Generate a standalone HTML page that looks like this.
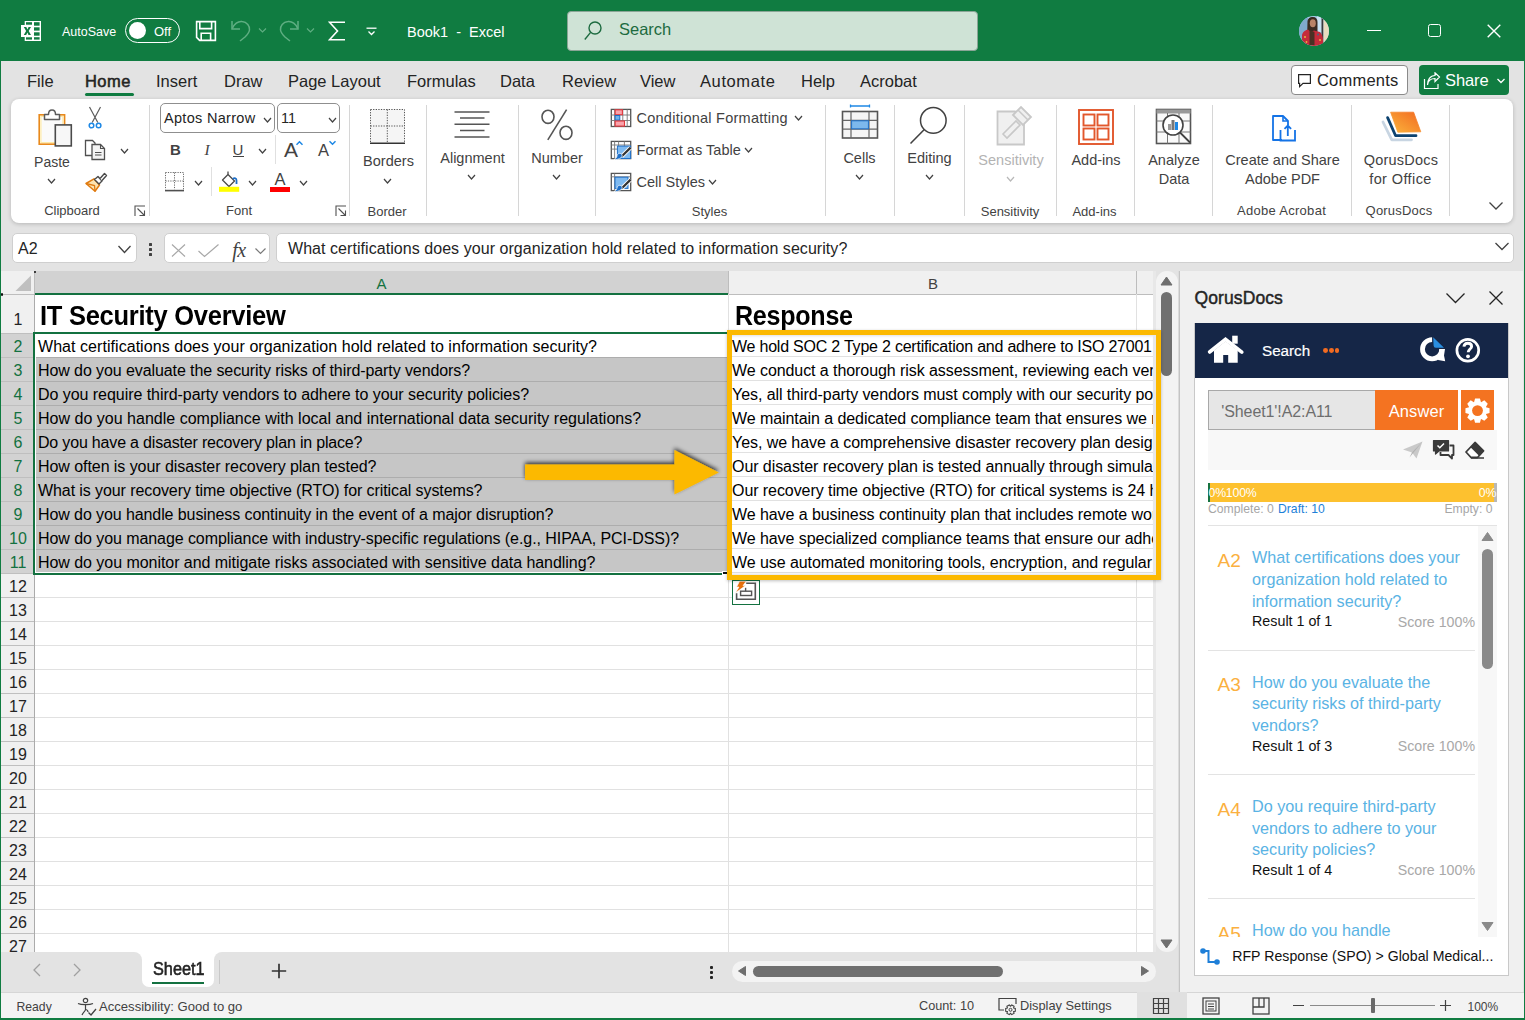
<!DOCTYPE html><html><head><meta charset="utf-8"><style>*{box-sizing:border-box;margin:0;padding:0}
html,body{width:1525px;height:1020px;overflow:hidden;background:#e3e3e3;font-family:"Liberation Sans",sans-serif;color:#242424}
.a{position:absolute}
#title{left:0;top:0;width:1525px;height:61px;background:#107c41}
#tabs{left:0;top:61px;width:1525px;height:38px;background:#e3e3e3}
#lb{left:0;top:61px;width:1px;height:959px;background:#107c41}
#rb{left:1524px;top:61px;width:1px;height:959px;background:#107c41}
#bb{left:0;top:1018px;width:1525px;height:2px;background:#107c41}
.t{position:absolute;top:11px;font-size:16.5px;color:#242424;white-space:nowrap}
</style></head><body>
<div id="title" class="a">
<svg class="a" style="left:20px;top:20px" width="22" height="22" viewBox="0 0 22 22"><path d="M4.7 1H21V21H4.7V17H1V5H4.7Z" fill="#fff"/><g fill="#107c41"><rect x="6" y="2.2" width="6" height="2.5"/><rect x="14" y="2.2" width="5.6" height="3.5"/><rect x="14" y="7.3" width="5.6" height="3.3"/><rect x="14" y="12.3" width="5.6" height="3.4"/><rect x="14" y="17.2" width="5.6" height="2.4"/><rect x="6" y="17.3" width="6" height="2.3"/></g><path d="M3.8 7H6.3L7.4 9.5L8.6 7H11L8.7 11L11 15H8.5L7.4 12.4L6.2 15H3.8L6.1 11Z" fill="#107c41"/></svg>
<div class="a" style="left:62px;top:24.5px;font-size:12.5px;color:#fff">AutoSave</div>
<div class="a" style="left:125px;top:18px;width:55px;height:25px;border:1px solid #fff;border-radius:13px"></div>
<div class="a" style="left:129px;top:22px;width:17px;height:17px;border-radius:50%;background:#fff"></div>
<div class="a" style="left:154px;top:23.5px;font-size:13px;color:#fff">Off</div>
<svg class="a" style="left:195px;top:20px" width="23" height="23" viewBox="0 0 23 23" fill="none" stroke="#fff" stroke-width="1.6"><path d="M1.6 1.6H20.4V20.4H4.6L1.6 17.4Z"/><path d="M4.8 1.6V8.6H16.6V1.6"/><path d="M6.2 20.4V13.2H15.6V20.4"/></svg>
<svg class="a" style="left:230px;top:19px" width="22" height="23" viewBox="0 0 22 23" fill="none" stroke="#5fae82" stroke-width="1.5"><path d="M2 2V10H10"/><path d="M2.3 9.5C4 5 8 2 12 2.5C17 3 20 7 19.5 11C19 14 17 16 15 18L10 22"/></svg>
<svg class="a" style="left:258px;top:27px" width="9" height="7" viewBox="0 0 9 7" fill="none" stroke="#5fae82" stroke-width="1.2"><path d="M1 1.5L4.5 5L8 1.5"/></svg>
<svg class="a" style="left:278px;top:19px" width="22" height="23" viewBox="0 0 22 23" fill="none" stroke="#5fae82" stroke-width="1.5"><path d="M20 2V10H12"/><path d="M19.7 9.5C18 5 14 2 10 2.5C5 3 2 7 2.5 11C3 14 5 16 7 18L12 22"/></svg>
<svg class="a" style="left:306px;top:27px" width="9" height="7" viewBox="0 0 9 7" fill="none" stroke="#5fae82" stroke-width="1.2"><path d="M1 1.5L4.5 5L8 1.5"/></svg>
<svg class="a" style="left:328px;top:21px" width="18" height="20" viewBox="0 0 18 20" fill="none" stroke="#fff" stroke-width="1.6"><path d="M17 1.3H1.5L9.5 10L1.5 18.7H17"/></svg>
<svg class="a" style="left:366px;top:27px" width="11" height="10" viewBox="0 0 11 10" fill="none" stroke="#fff" stroke-width="1.3"><path d="M0.5 1.2H10.5"/><path d="M2.5 4.5L5.5 7.5L8.5 4.5"/></svg>
<div class="a" style="left:407px;top:23.5px;font-size:14.5px;color:#fff;white-space:pre">Book1  -  Excel</div>
<div class="a" style="left:567px;top:11px;width:411px;height:40px;background:#cfe3d6;border:1px solid #8aa596;border-radius:4px"></div>
<svg class="a" style="left:582px;top:18px" width="24" height="24" viewBox="0 0 24 24" fill="none" stroke="#1d6b40" stroke-width="1.4"><circle cx="13" cy="10" r="6"/><path d="M8.6 14.4L2.8 21.5"/></svg>
<div class="a" style="left:619px;top:20px;font-size:16.5px;color:#1d6b40">Search</div>
<svg class="a" style="left:1299px;top:16px" width="30" height="30" viewBox="0 0 30 30"><defs><clipPath id="av"><circle cx="15" cy="15" r="15"/></clipPath></defs><g clip-path="url(#av)">
<rect width="30" height="30" fill="#a8cdea"/>
<rect x="0" y="0" width="9" height="30" fill="#7fa9cc"/>
<rect x="18" y="0" width="6" height="16" fill="#c9e2f2"/>
<rect x="22.5" y="0" width="2" height="30" fill="#3a3a3a"/>
<rect x="24.5" y="0" width="6" height="30" fill="#e9dcbf"/>
<path d="M8.5 5C9 1.5 12 0.5 14 1C17 1 18.5 3 18.5 6V28H8Z" fill="#3b2a20"/>
<ellipse cx="13.8" cy="7.2" rx="3" ry="4" fill="#b98366"/>
<path d="M3 30V19C4 15 7 14 9 13.5L12 16L15 14.5L21 16C23 18 24 21 24 24V30Z" fill="#c52a3a"/>
<path d="M10.5 14V29H15.5V16Z" fill="#4a3024"/>
<circle cx="6" cy="21" r="1" fill="#e6b640"/><circle cx="19" cy="18.5" r="0.9" fill="#2f6f8a"/><circle cx="21" cy="24" r="1" fill="#e6b640"/><circle cx="7.5" cy="26" r="0.9" fill="#e6b640"/>
</g></svg>
<div class="a" style="left:1367px;top:29.5px;width:14px;height:1.2px;background:#fff"></div>
<div class="a" style="left:1428px;top:24px;width:13px;height:13px;border:1.4px solid #fff;border-radius:2.5px"></div>
<svg class="a" style="left:1487px;top:24px" width="14" height="14" viewBox="0 0 14 14" stroke="#fff" stroke-width="1.4"><path d="M0.7 0.7L13.3 13.3M13.3 0.7L0.7 13.3"/></svg>
</div>
<div id="tabs" class="a">
<div class="t" style="left:27px">File</div>
<div class="t" style="left:85px;top:11px;font-size:16.5px;letter-spacing:0.45px;-webkit-text-stroke:0.55px #242424">Home</div>
<div class="a" style="left:85px;top:32px;width:49px;height:3px;border-radius:2px;background:#107c41"></div>
<div class="t" style="left:156px">Insert</div>
<div class="t" style="left:224px">Draw</div>
<div class="t" style="left:288px">Page Layout</div>
<div class="t" style="left:407px">Formulas</div>
<div class="t" style="left:500px">Data</div>
<div class="t" style="left:562px">Review</div>
<div class="t" style="left:640px">View</div>
<div class="t" style="left:700px;letter-spacing:0.6px">Automate</div>
<div class="t" style="left:801px">Help</div>
<div class="t" style="left:860px">Acrobat</div>
<div class="a" style="left:1291px;top:4px;width:117px;height:30px;background:#fff;border:1px solid #8a8a8a;border-radius:4px"></div>
<svg class="a" style="left:1297px;top:12px" width="16" height="16" viewBox="0 0 16 16" fill="none" stroke="#242424" stroke-width="1.2"><path d="M1.6 1.6H13.4V10.4H6L2.6 13.6V10.4H1.6Z"/></svg>
<div class="a" style="left:1317px;top:10px;font-size:16.5px;color:#242424;letter-spacing:0.2px">Comments</div>
<div class="a" style="left:1419px;top:4px;width:90px;height:30px;background:#107c41;border-radius:4px"></div>
<svg class="a" style="left:1423px;top:11px" width="18" height="18" viewBox="0 0 18 18" fill="none" stroke="#fff" stroke-width="1.2"><path d="M1.5 7V16.5H15V12"/><path d="M4.5 13C5 9 8 6.5 12 6.5V9.5L16.5 5L12 0.8V3.5C7 3.5 4.5 8 4.5 13Z"/></svg>
<div class="a" style="left:1445px;top:10px;font-size:16.5px;color:#fff;letter-spacing:-0.1px">Share</div>
<svg class="a" style="left:1495.5px;top:15.5px" width="10" height="8" viewBox="0 0 10 8" fill="none" stroke="#fff" stroke-width="1.3"><path d="M1.5 2L5 5.5L8.5 2"/></svg>
</div>

<div class="a" style="left:11px;top:99px;width:1502px;height:124px;background:#fff;border-radius:8px;box-shadow:0 1px 4px rgba(0,0,0,.2)"></div>
<svg class="a" style="left:36px;top:106px;" width="38" height="42" viewBox="0 0 38 42">
<rect x="3.2" y="8.8" width="25.4" height="29.4" fill="#fff6dc" stroke="#e8891c" stroke-width="1.6"/>
<rect x="5" y="10.5" width="21.8" height="26" fill="#fafafa" stroke="#fde9a6" stroke-width="1"/>
<path d="M8.5 13.5V8.5H12.5C12.5 6 13.8 4 16 4C18.2 4 19.5 6 19.5 8.5H23.5V13.5Z" fill="#fff" stroke="#5c5c5c" stroke-width="1.5" stroke-linejoin="round"/>
<rect x="19.3" y="18.9" width="16" height="21" fill="#f7f7f7" stroke="#4a4a4a" stroke-width="1.6"/>
</svg>
<div class="a" style="left:-198px;width:500px;text-align:center;top:154.6px;font-size:14px;line-height:1;color:#424242;white-space:pre;">Paste</div>
<svg class="a" style="left:47px;top:178px;" width="9" height="6" viewBox="0 0 9 6"><path d="M1 1L4.5 5L8 1" fill="none" stroke="#424242" stroke-width="1.2"/></svg>
<svg class="a" style="left:86px;top:106px;" width="18" height="24" viewBox="0 0 18 24">
<path d="M3.5 1L11.8 16.5M14.5 1L6.2 16.5" fill="none" stroke="#5c5c5c" stroke-width="1.2"/>
<circle cx="5.5" cy="19.5" r="2.3" fill="#fff" stroke="#1e88e5" stroke-width="1.5"/>
<circle cx="12.6" cy="19.5" r="2.3" fill="#fff" stroke="#1e88e5" stroke-width="1.5"/>
</svg>
<svg class="a" style="left:83px;top:139px;" width="24" height="22" viewBox="0 0 24 22">
<path d="M2.5 1.5H9.5L12 4V16.5H2.5Z" fill="#fff" stroke="#505050" stroke-width="1.3"/>
<path d="M9 5.5H17.5L21.5 9.5V20.5H9Z" fill="#f4f4f4" stroke="#505050" stroke-width="1.3"/>
<path d="M17.5 5.5V9.5H21.5" fill="none" stroke="#505050" stroke-width="1.1"/>
<path d="M12 13.5H18.5M12 16H18.5" stroke="#505050" stroke-width="1"/>
</svg>
<svg class="a" style="left:120px;top:147.5px;" width="9" height="6" viewBox="0 0 9 6"><path d="M1 1L4.5 5L8 1" fill="none" stroke="#424242" stroke-width="1.2"/></svg>
<svg class="a" style="left:84px;top:170px;" width="24" height="23" viewBox="0 0 24 23">
<path d="M2 13.5L10 8.8L15.5 15L11 21.3Z" fill="#fce3b0" stroke="#e07b10" stroke-width="1.5" stroke-linejoin="round"/>
<path d="M2 13.5L10.5 15.5L11 21.3" fill="none" stroke="#e07b10" stroke-width="1.3"/>
<path d="M10.5 9.5L14 6.5L18 11L15 14Z" fill="#fff" stroke="#4a4a4a" stroke-width="1.4" stroke-linejoin="round"/>
<path d="M16 8.5L20.5 3.5L22.5 5.5L18 10.5" fill="#fff" stroke="#4a4a4a" stroke-width="1.4" stroke-linejoin="round"/>
</svg>
<div class="a" style="left:-178px;width:500px;text-align:center;top:203.9px;font-size:13px;line-height:1;color:#424242;white-space:pre;">Clipboard</div>
<svg class="a" style="left:134px;top:205px;" width="12" height="12" viewBox="0 0 12 12"><path d="M1 11V1H11" fill="none" stroke="#505050" stroke-width="1.1"/><path d="M3.5 3.5L10.5 10.5M5.5 10.5H10.5V5.5" fill="none" stroke="#505050" stroke-width="1.1"/></svg>
<div class="a" style="left:149px;top:105px;width:1px;height:111px;background:#d6d6d6;"></div>
<div class="a" style="left:160px;top:103px;width:115px;height:30px;background:#fff;border:1px solid #8f8f8f;border-radius:5px"></div>
<div class="a" style="left:164px;top:111.3px;font-size:14.5px;line-height:1;color:#242424;white-space:pre;letter-spacing:0.3px;">Aptos Narrow</div>
<svg class="a" style="left:262.5px;top:116.5px;" width="9" height="6" viewBox="0 0 9 6"><path d="M1 1L4.5 5L8 1" fill="none" stroke="#424242" stroke-width="1.2"/></svg>
<div class="a" style="left:277px;top:103px;width:63px;height:30px;background:#fff;border:1px solid #8f8f8f;border-radius:5px"></div>
<div class="a" style="left:281px;top:111.3px;font-size:14.5px;line-height:1;color:#242424;white-space:pre;">11</div>
<svg class="a" style="left:327.5px;top:116.5px;" width="9" height="6" viewBox="0 0 9 6"><path d="M1 1L4.5 5L8 1" fill="none" stroke="#424242" stroke-width="1.2"/></svg>
<div class="a" style="left:-74.5px;width:500px;text-align:center;top:142.2px;font-size:15px;line-height:1;color:#424242;white-space:pre;font-weight:bold;">B</div>
<div class="a" style="left:-43px;width:500px;text-align:center;top:141.8px;font-size:15.5px;line-height:1;color:#424242;white-space:pre;font-family:'Liberation Serif';font-style:italic;">I</div>
<div class="a" style="left:-12px;width:500px;text-align:center;top:142.2px;font-size:15px;line-height:1;color:#424242;white-space:pre;">U</div>
<div class="a" style="left:233px;top:155.5px;width:11px;height:1.3px;background:#424242;"></div>
<svg class="a" style="left:258px;top:147.5px;" width="9" height="6" viewBox="0 0 9 6"><path d="M1 1L4.5 5L8 1" fill="none" stroke="#424242" stroke-width="1.2"/></svg>
<div class="a" style="left:275px;top:135px;width:1px;height:29px;background:#e0e0e0;"></div>
<div class="a" style="left:41px;width:500px;text-align:center;top:138.6px;font-size:21px;line-height:1;color:#424242;white-space:pre;">A</div>
<svg class="a" style="left:295px;top:140px;" width="9" height="6" viewBox="0 0 9 6"><path d="M1.5 4.8L4.5 1.8L7.5 4.8" fill="none" stroke="#1e88e5" stroke-width="1.5"/></svg>
<div class="a" style="left:73.5px;width:500px;text-align:center;top:142.4px;font-size:16.5px;line-height:1;color:#424242;white-space:pre;">A</div>
<svg class="a" style="left:328px;top:140px;" width="9" height="6" viewBox="0 0 9 6"><path d="M1.5 1.2L4.5 4.2L7.5 1.2" fill="none" stroke="#1e88e5" stroke-width="1.5"/></svg>
<svg class="a" style="left:164px;top:171px;" width="22" height="22" viewBox="0 0 22 22">
<path d="M1.5 1.5H19.5V18.5M1.5 1.5V18.5M10.5 1.5V18.5M1.5 10H19.5" fill="none" stroke="#6a6a6a" stroke-width="1" stroke-dasharray="1.2 1.2"/>
<path d="M1 19.6H20" stroke="#505050" stroke-width="1.6"/>
</svg>
<svg class="a" style="left:194px;top:179.5px;" width="9" height="6" viewBox="0 0 9 6"><path d="M1 1L4.5 5L8 1" fill="none" stroke="#424242" stroke-width="1.2"/></svg>
<div class="a" style="left:211px;top:167px;width:1px;height:29px;background:#e0e0e0;"></div>
<svg class="a" style="left:218px;top:170px;" width="24" height="23" viewBox="0 0 24 23">
<path d="M4.5 10L10 4.5L16.5 11L11 16.5Z" fill="#fff" stroke="#4a4a4a" stroke-width="1.3" stroke-linejoin="round"/>
<path d="M10 4.5V1.5" stroke="#4a4a4a" stroke-width="1.3"/>
<path d="M14.8 9C16.5 7.5 18.5 8 18.5 10.5V14" fill="none" stroke="#1e6fc8" stroke-width="1.8"/>
<rect x="1" y="16.8" width="20.2" height="5" fill="#ffff00"/>
</svg>
<svg class="a" style="left:248px;top:179.5px;" width="9" height="6" viewBox="0 0 9 6"><path d="M1 1L4.5 5L8 1" fill="none" stroke="#424242" stroke-width="1.2"/></svg>
<div class="a" style="left:30px;width:500px;text-align:center;top:171.2px;font-size:16.5px;line-height:1;color:#424242;white-space:pre;">A</div>
<div class="a" style="left:270px;top:187px;width:20px;height:5px;background:#ff0000;"></div>
<svg class="a" style="left:299px;top:179.5px;" width="9" height="6" viewBox="0 0 9 6"><path d="M1 1L4.5 5L8 1" fill="none" stroke="#424242" stroke-width="1.2"/></svg>
<div class="a" style="left:-11px;width:500px;text-align:center;top:203.6px;font-size:13px;line-height:1;color:#424242;white-space:pre;">Font</div>
<svg class="a" style="left:335px;top:205px;" width="12" height="12" viewBox="0 0 12 12"><path d="M1 11V1H11" fill="none" stroke="#505050" stroke-width="1.1"/><path d="M3.5 3.5L10.5 10.5M5.5 10.5H10.5V5.5" fill="none" stroke="#505050" stroke-width="1.1"/></svg>
<div class="a" style="left:349px;top:105px;width:1px;height:111px;background:#d6d6d6;"></div>
<svg class="a" style="left:369px;top:108px;" width="37" height="37" viewBox="0 0 37 37">
<rect x="1.5" y="1.5" width="34" height="33" fill="#f5f5f5"/>
<path d="M1.5 1.5H35.5V34.5M1.5 1.5V34.5M18.3 1.5V34.5M1.5 18H35.5" fill="none" stroke="#555" stroke-width="1" stroke-dasharray="1.3 1.3"/>
<path d="M1 35.2H36" stroke="#333" stroke-width="1.6"/>
</svg>
<div class="a" style="left:138.5px;width:500px;text-align:center;top:154.3px;font-size:14.5px;line-height:1;color:#424242;white-space:pre;">Borders</div>
<svg class="a" style="left:383px;top:177.5px;" width="9" height="6" viewBox="0 0 9 6"><path d="M1 1L4.5 5L8 1" fill="none" stroke="#424242" stroke-width="1.2"/></svg>
<div class="a" style="left:137px;width:500px;text-align:center;top:204.8px;font-size:13px;line-height:1;color:#424242;white-space:pre;">Border</div>
<div class="a" style="left:426px;top:105px;width:1px;height:111px;background:#d6d6d6;"></div>
<svg class="a" style="left:453px;top:110px;" width="38" height="29" viewBox="0 0 38 29">
<path d="M1.5 2H36.5M7 8H31.5M1.5 14.3H36.5M7 20.6H31.5M1.5 27H36.5" stroke="#555" stroke-width="1.5"/>
</svg>
<div class="a" style="left:222.5px;width:500px;text-align:center;top:150.6px;font-size:14.5px;line-height:1;color:#424242;white-space:pre;">Alignment</div>
<svg class="a" style="left:467px;top:173.5px;" width="9" height="6" viewBox="0 0 9 6"><path d="M1 1L4.5 5L8 1" fill="none" stroke="#424242" stroke-width="1.2"/></svg>
<div class="a" style="left:518px;top:105px;width:1px;height:111px;background:#d6d6d6;"></div>
<svg class="a" style="left:538px;top:107px;" width="38" height="36" viewBox="0 0 38 36"><ellipse cx="10" cy="9.8" rx="6" ry="6.6" fill="none" stroke="#555" stroke-width="1.6"/><ellipse cx="28" cy="25.8" rx="6" ry="6.6" fill="none" stroke="#555" stroke-width="1.6"/><path d="M28.6 2.7L9.8 32.8" stroke="#555" stroke-width="1.6"/></svg>
<div class="a" style="left:307px;width:500px;text-align:center;top:150.6px;font-size:14.5px;line-height:1;color:#424242;white-space:pre;">Number</div>
<svg class="a" style="left:552px;top:173.5px;" width="9" height="6" viewBox="0 0 9 6"><path d="M1 1L4.5 5L8 1" fill="none" stroke="#424242" stroke-width="1.2"/></svg>
<div class="a" style="left:595px;top:105px;width:1px;height:111px;background:#d6d6d6;"></div>
<svg class="a" style="left:610px;top:108px;" width="22" height="20" viewBox="0 0 22 20">
<rect x="1.3" y="1.4" width="19.4" height="17.1" fill="#fff" stroke="#555" stroke-width="1.3"/>
<path d="M1.3 7H20.7M1.3 12.5H20.7M4.6 1.4V18.5M12.8 1.4V18.5M17.2 1.4V18.5" stroke="#777" stroke-width="0.9"/>
<rect x="5.2" y="1.8" width="7.2" height="4.9" fill="#f9a3ab" stroke="#e0393e" stroke-width="1.1"/>
<rect x="5.2" y="7.5" width="4.6" height="4.6" fill="#6fb1ec" stroke="#1e6fc8" stroke-width="1"/>
<rect x="5.2" y="13" width="9.3" height="5.1" fill="#f9a3ab" stroke="#e0393e" stroke-width="1.1"/>
</svg>
<div class="a" style="left:636.5px;top:111.4px;font-size:14.5px;line-height:1;color:#424242;white-space:pre;letter-spacing:0.25px;">Conditional Formatting</div>
<svg class="a" style="left:794px;top:115px;" width="9" height="6" viewBox="0 0 9 6"><path d="M1 1L4.5 5L8 1" fill="none" stroke="#424242" stroke-width="1.2"/></svg>
<svg class="a" style="left:610px;top:140px;" width="22" height="21" viewBox="0 0 22 21">
<rect x="1.3" y="1.4" width="19.4" height="17.2" fill="#fff" stroke="#555" stroke-width="1.3"/>
<path d="M1.3 5H20.7M1.3 9.1H20.7M4.6 1.4V18.6M8.6 1.4V18.6M14.4 1.4V18.6" stroke="#777" stroke-width="0.9"/>
<rect x="7.4" y="6.1" width="13.2" height="12.4" fill="#7fbaf0" stroke="#1e6fc8" stroke-width="1"/>
<path d="M20.6 7.6L11.8 16.2" stroke="#fff" stroke-width="4"/><path d="M20.6 7.6L11.8 16.2" stroke="#333" stroke-width="2.2"/><path d="M4 19.6C6 19.6 9 19.4 11.2 17.6C12.6 16.4 12.4 14.4 11 13.6C9.4 12.8 7.6 13.6 7.2 15.4C6.8 17.4 5.6 18.8 4 19.6Z" fill="#1e6fc8" stroke="#fff" stroke-width="0.7"/>
</svg>
<div class="a" style="left:636.5px;top:143.2px;font-size:14.5px;line-height:1;color:#424242;white-space:pre;letter-spacing:0.05px;">Format as Table</div>
<svg class="a" style="left:744px;top:147px;" width="9" height="6" viewBox="0 0 9 6"><path d="M1 1L4.5 5L8 1" fill="none" stroke="#424242" stroke-width="1.2"/></svg>
<svg class="a" style="left:610px;top:172px;" width="22" height="21" viewBox="0 0 22 21">
<rect x="1.3" y="1.4" width="19.4" height="17.2" fill="#fff" stroke="#555" stroke-width="1.3"/>
<path d="M1.3 4.8H20.7M4.6 1.4V18.6" stroke="#777" stroke-width="0.9"/>
<rect x="5" y="5.2" width="13" height="11.2" fill="#7fbaf0" stroke="#1e6fc8" stroke-width="1"/>
<path d="M20.6 7.6L11.8 16.2" stroke="#fff" stroke-width="4"/><path d="M20.6 7.6L11.8 16.2" stroke="#333" stroke-width="2.2"/><path d="M4 19.6C6 19.6 9 19.4 11.2 17.6C12.6 16.4 12.4 14.4 11 13.6C9.4 12.8 7.6 13.6 7.2 15.4C6.8 17.4 5.6 18.8 4 19.6Z" fill="#1e6fc8" stroke="#fff" stroke-width="0.7"/>
</svg>
<div class="a" style="left:636.5px;top:175.2px;font-size:14.5px;line-height:1;color:#424242;white-space:pre;">Cell Styles</div>
<svg class="a" style="left:707.5px;top:179px;" width="9" height="6" viewBox="0 0 9 6"><path d="M1 1L4.5 5L8 1" fill="none" stroke="#424242" stroke-width="1.2"/></svg>
<div class="a" style="left:459.5px;width:500px;text-align:center;top:204.9px;font-size:13px;line-height:1;color:#424242;white-space:pre;">Styles</div>
<div class="a" style="left:825px;top:105px;width:1px;height:111px;background:#d6d6d6;"></div>
<svg class="a" style="left:840px;top:103px;" width="40" height="38" viewBox="0 0 40 38">
<path d="M10.5 1.5V4.5M29.5 1.5V4.5M10.5 3H29.5" stroke="#1e88e5" stroke-width="1.3"/>
<rect x="2.5" y="8.5" width="35" height="26.5" fill="#f5f5f5" stroke="#555" stroke-width="1.6"/>
<path d="M2.5 17.3H37.5M2.5 26.2H37.5M11 8.5V35M29 8.5V35" stroke="#666" stroke-width="1.2"/>
<rect x="11.6" y="17.8" width="16.8" height="8" fill="#7db8ec" stroke="#1e6fc8" stroke-width="1"/>
</svg>
<div class="a" style="left:609.5px;width:500px;text-align:center;top:150.9px;font-size:14.5px;line-height:1;color:#424242;white-space:pre;">Cells</div>
<svg class="a" style="left:855px;top:173.5px;" width="9" height="6" viewBox="0 0 9 6"><path d="M1 1L4.5 5L8 1" fill="none" stroke="#424242" stroke-width="1.2"/></svg>
<div class="a" style="left:894px;top:105px;width:1px;height:111px;background:#d6d6d6;"></div>
<svg class="a" style="left:908px;top:105px;" width="40" height="41" viewBox="0 0 40 41">
<circle cx="25.3" cy="15.4" r="12.8" fill="#fff" stroke="#424242" stroke-width="1.5"/>
<path d="M16.3 24.5L2.5 38.5" stroke="#424242" stroke-width="1.6"/>
</svg>
<div class="a" style="left:679.5px;width:500px;text-align:center;top:150.9px;font-size:14.5px;line-height:1;color:#424242;white-space:pre;">Editing</div>
<svg class="a" style="left:924.5px;top:173.5px;" width="9" height="6" viewBox="0 0 9 6"><path d="M1 1L4.5 5L8 1" fill="none" stroke="#424242" stroke-width="1.2"/></svg>
<div class="a" style="left:964px;top:105px;width:1px;height:111px;background:#d6d6d6;"></div>
<svg class="a" style="left:994px;top:104px;" width="40" height="43" viewBox="0 0 40 43">
<path d="M3.5 7.5H21L30 16.5V40.5H3.5Z" fill="#f0f0f0" stroke="#c8c8c8" stroke-width="1.8"/>
<path d="M9 30L22 17L26 21L13 34Z" fill="#f0f0f0" stroke="#c8c8c8" stroke-width="1.6"/>
<path d="M19 11L27 3L37 13L29 21Z" fill="#f0f0f0" stroke="#c8c8c8" stroke-width="1.8"/>
<path d="M24 6L34 16" stroke="#c8c8c8" stroke-width="1.5"/>
</svg>
<div class="a" style="left:761px;width:500px;text-align:center;top:153.0px;font-size:14.5px;line-height:1;color:#b3b3b3;white-space:pre;">Sensitivity</div>
<svg class="a" style="left:1006px;top:175.5px;" width="9" height="6" viewBox="0 0 9 6"><path d="M1 1L4.5 5L8 1" fill="none" stroke="#b8b8b8" stroke-width="1.2"/></svg>
<div class="a" style="left:760px;width:500px;text-align:center;top:204.6px;font-size:13px;line-height:1;color:#424242;white-space:pre;">Sensitivity</div>
<div class="a" style="left:1056px;top:105px;width:1px;height:111px;background:#d6d6d6;"></div>
<svg class="a" style="left:1077px;top:108px;" width="38" height="38" viewBox="0 0 38 38">
<rect x="2" y="2" width="34" height="34" fill="#fff" stroke="#e2572c" stroke-width="1.9"/>
<rect x="6.5" y="6.5" width="11" height="11" fill="#fff" stroke="#e2572c" stroke-width="1.9"/>
<rect x="20.5" y="6.5" width="11" height="11" fill="#fff" stroke="#e2572c" stroke-width="1.9"/>
<rect x="6.5" y="20.5" width="11" height="11" fill="#fff" stroke="#e2572c" stroke-width="1.9"/>
<rect x="20.5" y="20.5" width="11" height="11" fill="#fff" stroke="#e2572c" stroke-width="1.9"/>
</svg>
<div class="a" style="left:846px;width:500px;text-align:center;top:153.0px;font-size:14.5px;line-height:1;color:#424242;white-space:pre;">Add-ins</div>
<div class="a" style="left:844.5px;width:500px;text-align:center;top:204.6px;font-size:13px;line-height:1;color:#424242;white-space:pre;">Add-ins</div>
<div class="a" style="left:1134px;top:105px;width:1px;height:111px;background:#d6d6d6;"></div>
<svg class="a" style="left:1155px;top:108px;" width="38" height="38" viewBox="0 0 38 38">
<rect x="1.5" y="1.5" width="34" height="34" fill="#fafafa" stroke="#555" stroke-width="1.6"/>
<rect x="1.5" y="1.5" width="34" height="4" fill="#9a9a9a"/>
<path d="M1.5 13H35.5M1.5 24H35.5M12.5 5V35.5M24 5V35.5" stroke="#777" stroke-width="1"/>
<circle cx="18" cy="17" r="10" fill="#fff" stroke="#424242" stroke-width="1.6"/>
<path d="M25 24.5L35 34.5" stroke="#424242" stroke-width="1.8"/>
<rect x="13" y="16" width="3" height="6" fill="#9a9a9a"/><rect x="16.5" y="12" width="3" height="10" fill="#777"/><rect x="20" y="14" width="3" height="8" fill="#1e88e5"/>
</svg>
<div class="a" style="left:924px;width:500px;text-align:center;top:153.0px;font-size:14.5px;line-height:1;color:#424242;white-space:pre;">Analyze</div>
<div class="a" style="left:924px;width:500px;text-align:center;top:171.9px;font-size:14.5px;line-height:1;color:#424242;white-space:pre;">Data</div>
<div class="a" style="left:1212px;top:105px;width:1px;height:111px;background:#d6d6d6;"></div>
<svg class="a" style="left:1270px;top:114px;" width="28" height="29" viewBox="0 0 28 29">
<path d="M12 26H3V2H13L18 7V11" fill="none" stroke="#1473e6" stroke-width="1.8" stroke-linejoin="round"/>
<path d="M13 2V7H18" fill="none" stroke="#1473e6" stroke-width="1.6"/>
<path d="M10.5 16V26.5H25V16" fill="none" stroke="#1473e6" stroke-width="1.8"/>
<path d="M17.8 22V11.5M14.5 14.8L17.8 11.5L21.1 14.8" fill="none" stroke="#1473e6" stroke-width="1.8"/>
</svg>
<div class="a" style="left:1032.5px;width:500px;text-align:center;top:152.6px;font-size:14.5px;line-height:1;color:#424242;white-space:pre;">Create and Share</div>
<div class="a" style="left:1032.5px;width:500px;text-align:center;top:172.2px;font-size:14.5px;line-height:1;color:#424242;white-space:pre;">Adobe PDF</div>
<div class="a" style="left:1031.5px;width:500px;text-align:center;top:204.3px;font-size:13px;line-height:1;color:#424242;white-space:pre;letter-spacing:0.3px;">Adobe Acrobat</div>
<div class="a" style="left:1351px;top:105px;width:1px;height:111px;background:#d6d6d6;"></div>
<svg class="a" style="left:1375px;top:105px;" width="55" height="42" viewBox="0 0 55 42">
<defs><linearGradient id="qg" x1="0" y1="1" x2="1" y2="0"><stop offset="0" stop-color="#fbb43c"/><stop offset="1" stop-color="#f26a21"/></linearGradient></defs>
<path d="M8 17L16.8 34.8H36.5" fill="none" stroke="#c8d5e2" stroke-width="2.8" stroke-linecap="round" stroke-linejoin="round"/>
<path d="M12.6 12.6L20.6 30.7H41" fill="none" stroke="#0d426f" stroke-width="2.8" stroke-linecap="round" stroke-linejoin="round"/>
<path d="M15.6 7.2H38.6L45.8 26.8L22.8 27.2Z" fill="url(#qg)" stroke="url(#qg)" stroke-width="0.8" stroke-linejoin="round"/>
</svg>
<div class="a" style="left:1151px;width:500px;text-align:center;top:152.6px;font-size:14.5px;line-height:1;color:#424242;white-space:pre;letter-spacing:0.2px;">QorusDocs</div>
<div class="a" style="left:1150.5px;width:500px;text-align:center;top:172.2px;font-size:14.5px;line-height:1;color:#424242;white-space:pre;letter-spacing:0.4px;">for Office</div>
<div class="a" style="left:1149px;width:500px;text-align:center;top:204.3px;font-size:13px;line-height:1;color:#424242;white-space:pre;letter-spacing:0.2px;">QorusDocs</div>
<div class="a" style="left:1449px;top:105px;width:1px;height:111px;background:#d6d6d6;"></div>
<svg class="a" style="left:1488px;top:201px;" width="16" height="10" viewBox="0 0 16 10"><path d="M1.5 1.5L8 8L14.5 1.5" fill="none" stroke="#424242" stroke-width="1.3"/></svg>
<div class="a" style="left:12px;top:233px;width:125px;height:30px;background:#fff;border:1px solid #cfcfcf;border-radius:5px"></div>
<div class="a" style="left:18px;top:241.4px;font-size:16px;line-height:1;color:#242424;white-space:pre;">A2</div>
<svg class="a" style="left:117px;top:244px;" width="15" height="11" viewBox="0 0 15 11"><path d="M1.5 2L7.5 8.5L13.5 2" fill="none" stroke="#424242" stroke-width="1.3"/></svg>
<div class="a" style="left:149px;top:243px;width:3px;height:3px;background:#424242;border-radius:0.5px"></div>
<div class="a" style="left:149px;top:248px;width:3px;height:3px;background:#424242;border-radius:0.5px"></div>
<div class="a" style="left:149px;top:253px;width:3px;height:3px;background:#424242;border-radius:0.5px"></div>
<div class="a" style="left:164px;top:233px;width:106px;height:30px;background:#fff;border:1px solid #cfcfcf;border-radius:5px"></div>
<svg class="a" style="left:170px;top:243px;" width="18" height="15" viewBox="0 0 18 15"><path d="M2 1.5L15 13.5M15 1.5L2 13.5" stroke="#a8a8a8" stroke-width="1.2"/></svg>
<svg class="a" style="left:197px;top:243px;" width="24" height="15" viewBox="0 0 24 15"><path d="M1.5 8L7.5 13.5L21.5 1.5" fill="none" stroke="#a8a8a8" stroke-width="1.2"/></svg>
<div class="a" style="left:-11px;width:500px;text-align:center;top:240.0px;font-size:20px;line-height:1;color:#424242;white-space:pre;letter-spacing:-0.5px;font-family:'Liberation Serif';font-style:italic;">fx</div>
<svg class="a" style="left:254px;top:247px;" width="13" height="9" viewBox="0 0 13 9"><path d="M1.5 1.5L6.5 6.5L11.5 1.5" fill="none" stroke="#7a7a7a" stroke-width="1.2"/></svg>
<div class="a" style="left:276px;top:233px;width:1238px;height:30px;background:#fff;border:1px solid #cfcfcf;border-radius:5px"></div>
<div class="a" style="left:288px;top:241.4px;font-size:16px;line-height:1;color:#242424;white-space:pre;letter-spacing:0.055px;">What certifications does your organization hold related to information security?</div>
<svg class="a" style="left:1494px;top:241px;" width="16" height="11" viewBox="0 0 16 11"><path d="M1.5 2L8 8.5L14.5 2" fill="none" stroke="#424242" stroke-width="1.3"/></svg>
<div class="a" style="left:0px;top:271px;width:1155px;height:681px;background:#fff;"></div>
<div class="a" style="left:0px;top:271px;width:1153px;height:23px;background:#f0f0f0;"></div>
<div class="a" style="left:35px;top:271px;width:693px;height:23px;background:#d2d2d2;"></div>
<div class="a" style="left:0px;top:294px;width:1153px;height:1px;background:#bdbdbd;"></div>
<div class="a" style="left:35px;top:293px;width:694px;height:2px;background:#137140;"></div>
<div class="a" style="left:34px;top:271px;width:1px;height:23px;background:#bdbdbd;"></div>
<div class="a" style="left:728px;top:271px;width:1px;height:23px;background:#bdbdbd;"></div>
<div class="a" style="left:1136px;top:271px;width:1px;height:23px;background:#bdbdbd;"></div>
<svg class="a" style="left:15px;top:275px;" width="17" height="17" viewBox="0 0 17 17"><path d="M16 0.5V16H0.5Z" fill="#bfbfbf"/></svg>
<div class="a" style="left:131.5px;width:500px;text-align:center;top:276.2px;font-size:15px;line-height:1;color:#137140;white-space:pre;">A</div>
<div class="a" style="left:683px;width:500px;text-align:center;top:276.2px;font-size:15px;line-height:1;color:#424242;white-space:pre;">B</div>
<div class="a" style="left:0px;top:294px;width:34px;height:658px;background:#f0f0f0;"></div>
<div class="a" style="left:0px;top:333px;width:34px;height:241px;background:#d2d2d2;"></div>
<div class="a" style="left:34px;top:294px;width:1px;height:658px;background:#ababab;"></div>
<div class="a" style="left:0px;top:294px;width:34px;height:1px;background:#bdbdbd;"></div>
<div class="a" style="left:0px;top:333px;width:34px;height:1px;background:#bfbfbf;"></div>
<div class="a" style="left:35px;top:333px;width:1118px;height:1px;background:#e1e1e1;"></div>
<div class="a" style="left:0px;top:357px;width:34px;height:1px;background:#bfbfbf;"></div>
<div class="a" style="left:35px;top:357px;width:1118px;height:1px;background:#e1e1e1;"></div>
<div class="a" style="left:0px;top:381px;width:34px;height:1px;background:#bfbfbf;"></div>
<div class="a" style="left:35px;top:381px;width:1118px;height:1px;background:#e1e1e1;"></div>
<div class="a" style="left:0px;top:405px;width:34px;height:1px;background:#bfbfbf;"></div>
<div class="a" style="left:35px;top:405px;width:1118px;height:1px;background:#e1e1e1;"></div>
<div class="a" style="left:0px;top:429px;width:34px;height:1px;background:#bfbfbf;"></div>
<div class="a" style="left:35px;top:429px;width:1118px;height:1px;background:#e1e1e1;"></div>
<div class="a" style="left:0px;top:453px;width:34px;height:1px;background:#bfbfbf;"></div>
<div class="a" style="left:35px;top:453px;width:1118px;height:1px;background:#e1e1e1;"></div>
<div class="a" style="left:0px;top:477px;width:34px;height:1px;background:#bfbfbf;"></div>
<div class="a" style="left:35px;top:477px;width:1118px;height:1px;background:#e1e1e1;"></div>
<div class="a" style="left:0px;top:501px;width:34px;height:1px;background:#bfbfbf;"></div>
<div class="a" style="left:35px;top:501px;width:1118px;height:1px;background:#e1e1e1;"></div>
<div class="a" style="left:0px;top:525px;width:34px;height:1px;background:#bfbfbf;"></div>
<div class="a" style="left:35px;top:525px;width:1118px;height:1px;background:#e1e1e1;"></div>
<div class="a" style="left:0px;top:549px;width:34px;height:1px;background:#bfbfbf;"></div>
<div class="a" style="left:35px;top:549px;width:1118px;height:1px;background:#e1e1e1;"></div>
<div class="a" style="left:0px;top:573px;width:34px;height:1px;background:#bfbfbf;"></div>
<div class="a" style="left:35px;top:573px;width:1118px;height:1px;background:#e1e1e1;"></div>
<div class="a" style="left:0px;top:597px;width:34px;height:1px;background:#bfbfbf;"></div>
<div class="a" style="left:35px;top:597px;width:1118px;height:1px;background:#e1e1e1;"></div>
<div class="a" style="left:0px;top:621px;width:34px;height:1px;background:#bfbfbf;"></div>
<div class="a" style="left:35px;top:621px;width:1118px;height:1px;background:#e1e1e1;"></div>
<div class="a" style="left:0px;top:645px;width:34px;height:1px;background:#bfbfbf;"></div>
<div class="a" style="left:35px;top:645px;width:1118px;height:1px;background:#e1e1e1;"></div>
<div class="a" style="left:0px;top:669px;width:34px;height:1px;background:#bfbfbf;"></div>
<div class="a" style="left:35px;top:669px;width:1118px;height:1px;background:#e1e1e1;"></div>
<div class="a" style="left:0px;top:693px;width:34px;height:1px;background:#bfbfbf;"></div>
<div class="a" style="left:35px;top:693px;width:1118px;height:1px;background:#e1e1e1;"></div>
<div class="a" style="left:0px;top:717px;width:34px;height:1px;background:#bfbfbf;"></div>
<div class="a" style="left:35px;top:717px;width:1118px;height:1px;background:#e1e1e1;"></div>
<div class="a" style="left:0px;top:741px;width:34px;height:1px;background:#bfbfbf;"></div>
<div class="a" style="left:35px;top:741px;width:1118px;height:1px;background:#e1e1e1;"></div>
<div class="a" style="left:0px;top:765px;width:34px;height:1px;background:#bfbfbf;"></div>
<div class="a" style="left:35px;top:765px;width:1118px;height:1px;background:#e1e1e1;"></div>
<div class="a" style="left:0px;top:789px;width:34px;height:1px;background:#bfbfbf;"></div>
<div class="a" style="left:35px;top:789px;width:1118px;height:1px;background:#e1e1e1;"></div>
<div class="a" style="left:0px;top:813px;width:34px;height:1px;background:#bfbfbf;"></div>
<div class="a" style="left:35px;top:813px;width:1118px;height:1px;background:#e1e1e1;"></div>
<div class="a" style="left:0px;top:837px;width:34px;height:1px;background:#bfbfbf;"></div>
<div class="a" style="left:35px;top:837px;width:1118px;height:1px;background:#e1e1e1;"></div>
<div class="a" style="left:0px;top:861px;width:34px;height:1px;background:#bfbfbf;"></div>
<div class="a" style="left:35px;top:861px;width:1118px;height:1px;background:#e1e1e1;"></div>
<div class="a" style="left:0px;top:885px;width:34px;height:1px;background:#bfbfbf;"></div>
<div class="a" style="left:35px;top:885px;width:1118px;height:1px;background:#e1e1e1;"></div>
<div class="a" style="left:0px;top:909px;width:34px;height:1px;background:#bfbfbf;"></div>
<div class="a" style="left:35px;top:909px;width:1118px;height:1px;background:#e1e1e1;"></div>
<div class="a" style="left:0px;top:933px;width:34px;height:1px;background:#bfbfbf;"></div>
<div class="a" style="left:35px;top:933px;width:1118px;height:1px;background:#e1e1e1;"></div>
<div class="a" style="left:0px;top:957px;width:34px;height:1px;background:#bfbfbf;"></div>
<div class="a" style="left:35px;top:957px;width:1118px;height:1px;background:#e1e1e1;"></div>
<div class="a" style="left:728px;top:294px;width:1px;height:658px;background:#e1e1e1;"></div>
<div class="a" style="left:1136px;top:294px;width:1px;height:658px;background:#e1e1e1;"></div>
<div class="a" style="left:35px;top:357px;width:693px;height:216px;background:#c6c6c6;"></div>
<div class="a" style="left:35px;top:357px;width:693px;height:1px;background:#adadad;"></div>
<div class="a" style="left:35px;top:381px;width:693px;height:1px;background:#adadad;"></div>
<div class="a" style="left:35px;top:405px;width:693px;height:1px;background:#adadad;"></div>
<div class="a" style="left:35px;top:429px;width:693px;height:1px;background:#adadad;"></div>
<div class="a" style="left:35px;top:453px;width:693px;height:1px;background:#adadad;"></div>
<div class="a" style="left:35px;top:477px;width:693px;height:1px;background:#adadad;"></div>
<div class="a" style="left:35px;top:501px;width:693px;height:1px;background:#adadad;"></div>
<div class="a" style="left:35px;top:525px;width:693px;height:1px;background:#adadad;"></div>
<div class="a" style="left:35px;top:549px;width:693px;height:1px;background:#adadad;"></div>
<div class="a" style="left:35px;top:334px;width:693px;height:1px;background:#fff;"></div>
<div class="a" style="left:-232px;width:500px;text-align:center;top:312.4px;font-size:16px;line-height:1;color:#242424;white-space:pre;">1</div>
<div class="a" style="left:-232px;width:500px;text-align:center;top:339.4px;font-size:16px;line-height:1;color:#137140;white-space:pre;">2</div>
<div class="a" style="left:-232px;width:500px;text-align:center;top:363.4px;font-size:16px;line-height:1;color:#137140;white-space:pre;">3</div>
<div class="a" style="left:-232px;width:500px;text-align:center;top:387.4px;font-size:16px;line-height:1;color:#137140;white-space:pre;">4</div>
<div class="a" style="left:-232px;width:500px;text-align:center;top:411.4px;font-size:16px;line-height:1;color:#137140;white-space:pre;">5</div>
<div class="a" style="left:-232px;width:500px;text-align:center;top:435.4px;font-size:16px;line-height:1;color:#137140;white-space:pre;">6</div>
<div class="a" style="left:-232px;width:500px;text-align:center;top:459.4px;font-size:16px;line-height:1;color:#137140;white-space:pre;">7</div>
<div class="a" style="left:-232px;width:500px;text-align:center;top:483.4px;font-size:16px;line-height:1;color:#137140;white-space:pre;">8</div>
<div class="a" style="left:-232px;width:500px;text-align:center;top:507.4px;font-size:16px;line-height:1;color:#137140;white-space:pre;">9</div>
<div class="a" style="left:-232px;width:500px;text-align:center;top:531.4px;font-size:16px;line-height:1;color:#137140;white-space:pre;">10</div>
<div class="a" style="left:-232px;width:500px;text-align:center;top:555.4px;font-size:16px;line-height:1;color:#137140;white-space:pre;">11</div>
<div class="a" style="left:-232px;width:500px;text-align:center;top:579.4px;font-size:16px;line-height:1;color:#242424;white-space:pre;">12</div>
<div class="a" style="left:-232px;width:500px;text-align:center;top:603.4px;font-size:16px;line-height:1;color:#242424;white-space:pre;">13</div>
<div class="a" style="left:-232px;width:500px;text-align:center;top:627.4px;font-size:16px;line-height:1;color:#242424;white-space:pre;">14</div>
<div class="a" style="left:-232px;width:500px;text-align:center;top:651.4px;font-size:16px;line-height:1;color:#242424;white-space:pre;">15</div>
<div class="a" style="left:-232px;width:500px;text-align:center;top:675.4px;font-size:16px;line-height:1;color:#242424;white-space:pre;">16</div>
<div class="a" style="left:-232px;width:500px;text-align:center;top:699.4px;font-size:16px;line-height:1;color:#242424;white-space:pre;">17</div>
<div class="a" style="left:-232px;width:500px;text-align:center;top:723.4px;font-size:16px;line-height:1;color:#242424;white-space:pre;">18</div>
<div class="a" style="left:-232px;width:500px;text-align:center;top:747.4px;font-size:16px;line-height:1;color:#242424;white-space:pre;">19</div>
<div class="a" style="left:-232px;width:500px;text-align:center;top:771.4px;font-size:16px;line-height:1;color:#242424;white-space:pre;">20</div>
<div class="a" style="left:-232px;width:500px;text-align:center;top:795.4px;font-size:16px;line-height:1;color:#242424;white-space:pre;">21</div>
<div class="a" style="left:-232px;width:500px;text-align:center;top:819.4px;font-size:16px;line-height:1;color:#242424;white-space:pre;">22</div>
<div class="a" style="left:-232px;width:500px;text-align:center;top:843.4px;font-size:16px;line-height:1;color:#242424;white-space:pre;">23</div>
<div class="a" style="left:-232px;width:500px;text-align:center;top:867.4px;font-size:16px;line-height:1;color:#242424;white-space:pre;">24</div>
<div class="a" style="left:-232px;width:500px;text-align:center;top:891.4px;font-size:16px;line-height:1;color:#242424;white-space:pre;">25</div>
<div class="a" style="left:-232px;width:500px;text-align:center;top:915.4px;font-size:16px;line-height:1;color:#242424;white-space:pre;">26</div>
<div class="a" style="left:-232px;width:500px;text-align:center;top:939.4px;font-size:16px;line-height:1;color:#242424;white-space:pre;">27</div>
<div class="a" style="left:34px;top:332px;width:694px;height:2px;background:#137140;"></div>
<div class="a" style="left:33px;top:332px;width:2px;height:243px;background:#137140;"></div>
<div class="a" style="left:34px;top:573px;width:694px;height:2px;background:#137140;"></div>
<div class="a" style="left:35px;top:572px;width:692px;height:1px;background:#fff;"></div>
<div class="a" style="left:35px;top:334px;width:1px;height:238px;background:#fff;"></div>
<div class="a" style="left:722px;top:571px;width:12px;height:4px;background:#111;border:1px solid #fff"></div>
<div class="a" style="left:39.5px;top:300.8px;font-size:28.5px;line-height:1;color:#000;white-space:pre;font-weight:bold;letter-spacing:-0.3px;transform:scaleX(0.895);transform-origin:0 0;">IT Security Overview</div>
<div class="a" style="left:734.5px;top:300.8px;font-size:28.5px;line-height:1;color:#000;white-space:pre;font-weight:bold;letter-spacing:-0.3px;transform:scaleX(0.88);transform-origin:0 0;">Response</div>
<div class="a" style="left:38px;top:339.0px;font-size:16px;line-height:1;color:#000;white-space:pre;letter-spacing:0.051px;">What certifications does your organization hold related to information security?</div>
<div class="a" style="left:38px;top:363.0px;font-size:16px;line-height:1;color:#000;white-space:pre;letter-spacing:-0.089px;">How do you evaluate the security risks of third-party vendors?</div>
<div class="a" style="left:38px;top:387.0px;font-size:16px;line-height:1;color:#000;white-space:pre;letter-spacing:-0.049px;">Do you require third-party vendors to adhere to your security policies?</div>
<div class="a" style="left:38px;top:411.0px;font-size:16px;line-height:1;color:#000;white-space:pre;letter-spacing:0.012px;">How do you handle compliance with local and international data security regulations?</div>
<div class="a" style="left:38px;top:435.0px;font-size:16px;line-height:1;color:#000;white-space:pre;letter-spacing:-0.181px;">Do you have a disaster recovery plan in place?</div>
<div class="a" style="left:38px;top:459.0px;font-size:16px;line-height:1;color:#000;white-space:pre;letter-spacing:-0.064px;">How often is your disaster recovery plan tested?</div>
<div class="a" style="left:38px;top:483.0px;font-size:16px;line-height:1;color:#000;white-space:pre;letter-spacing:-0.09px;">What is your recovery time objective (RTO) for critical systems?</div>
<div class="a" style="left:38px;top:507.0px;font-size:16px;line-height:1;color:#000;white-space:pre;letter-spacing:-0.092px;">How do you handle business continuity in the event of a major disruption?</div>
<div class="a" style="left:38px;top:531.0px;font-size:16px;line-height:1;color:#000;white-space:pre;letter-spacing:-0.07px;">How do you manage compliance with industry-specific regulations (e.g., HIPAA, PCI-DSS)?</div>
<div class="a" style="left:38px;top:555.0px;font-size:16px;line-height:1;color:#000;white-space:pre;letter-spacing:-0.049px;">How do you monitor and mitigate risks associated with sensitive data handling?</div>
<div class="a" style="left:732px;top:335px;width:421px;height:240px;overflow:hidden;background:#fff">
<div class="a" style="left:0;top:21px;width:421px;height:1px;background:#e1e1e1"></div>
<div class="a" style="left:0px;top:4.0px;font-size:16px;line-height:1;color:#000;white-space:pre;letter-spacing:-0.22px">We hold SOC 2 Type 2 certification and adhere to ISO 27001 standards for information security management.</div>
<div class="a" style="left:0;top:45px;width:421px;height:1px;background:#e1e1e1"></div>
<div class="a" style="left:0px;top:28.0px;font-size:16px;line-height:1;color:#000;white-space:pre;letter-spacing:-0.07px">We conduct a thorough risk assessment, reviewing each vendor's security policies and certifications.</div>
<div class="a" style="left:0;top:69px;width:421px;height:1px;background:#e1e1e1"></div>
<div class="a" style="left:0px;top:52.0px;font-size:16px;line-height:1;color:#000;white-space:pre;letter-spacing:-0.07px">Yes, all third-party vendors must comply with our security policies and sign agreements.</div>
<div class="a" style="left:0;top:93px;width:421px;height:1px;background:#e1e1e1"></div>
<div class="a" style="left:0px;top:76.0px;font-size:16px;line-height:1;color:#000;white-space:pre;letter-spacing:-0.07px">We maintain a dedicated compliance team that ensures we meet all applicable regulations.</div>
<div class="a" style="left:0;top:117px;width:421px;height:1px;background:#e1e1e1"></div>
<div class="a" style="left:0px;top:100.0px;font-size:16px;line-height:1;color:#000;white-space:pre;letter-spacing:-0.07px">Yes, we have a comprehensive disaster recovery plan designed to restore operations.</div>
<div class="a" style="left:0;top:141px;width:421px;height:1px;background:#e1e1e1"></div>
<div class="a" style="left:0px;top:124.0px;font-size:16px;line-height:1;color:#000;white-space:pre;letter-spacing:-0.07px">Our disaster recovery plan is tested annually through simulated exercises.</div>
<div class="a" style="left:0;top:165px;width:421px;height:1px;background:#e1e1e1"></div>
<div class="a" style="left:0px;top:148.0px;font-size:16px;line-height:1;color:#000;white-space:pre;letter-spacing:-0.07px">Our recovery time objective (RTO) for critical systems is 24 hours.</div>
<div class="a" style="left:0;top:189px;width:421px;height:1px;background:#e1e1e1"></div>
<div class="a" style="left:0px;top:172.0px;font-size:16px;line-height:1;color:#000;white-space:pre;letter-spacing:-0.07px">We have a business continuity plan that includes remote work capabilities.</div>
<div class="a" style="left:0;top:213px;width:421px;height:1px;background:#e1e1e1"></div>
<div class="a" style="left:0px;top:196.0px;font-size:16px;line-height:1;color:#000;white-space:pre;letter-spacing:-0.07px">We have specialized compliance teams that ensure our adherence to regulations.</div>
<div class="a" style="left:0;top:237px;width:421px;height:1px;background:#e1e1e1"></div>
<div class="a" style="left:0px;top:220.0px;font-size:16px;line-height:1;color:#000;white-space:pre;letter-spacing:-0.07px">We use automated monitoring tools, encryption, and regular audits.</div>
<div class="a" style="left:0;top:0;width:421px;height:240px;box-shadow:inset 0 3px 3px -2px rgba(0,0,0,.12), inset 0 -3px 3px -2px rgba(0,0,0,.12)"></div>
</div>
<div class="a" style="left:732px;top:580px;width:28px;height:25px;background:#fff;border:1px solid #137140"></div>
<svg class="a" style="left:733px;top:580px;" width="26" height="24" viewBox="0 0 26 24">
<path d="M13.2 3.3H22.3V19.2H3.6V13.3" fill="none" stroke="#555" stroke-width="1.6"/>
<rect x="7.6" y="11.2" width="11" height="4.3" fill="none" stroke="#555" stroke-width="1.4"/>
<path d="M12.6 7.8V11.2" stroke="#555" stroke-width="1.4"/>
<path d="M6.6 1.2H13.2L10 5.6H12.5L2.6 12.8L6 7H3.6Z" fill="#e8700c" stroke="#fff" stroke-width="0.6"/>
</svg>
<div class="a" style="left:1153px;top:271px;width:3px;height:681px;background:#e8e8e8;"></div>
<div class="a" style="left:1156px;top:271px;width:22px;height:681px;background:#f3f3f3;border-radius:11px"></div>
<svg class="a" style="left:1159px;top:275px;" width="15" height="12" viewBox="0 0 15 12"><path d="M7.5 2L13 10H2Z" fill="#6e6e6e" stroke="#6e6e6e" stroke-width="1" stroke-linejoin="round"/></svg>
<div class="a" style="left:1161px;top:292px;width:11px;height:84px;background:#707070;border-radius:6px"></div>
<svg class="a" style="left:1159px;top:938px;" width="15" height="12" viewBox="0 0 15 12"><path d="M7.5 10L13 2H2Z" fill="#6e6e6e" stroke="#6e6e6e" stroke-width="1" stroke-linejoin="round"/></svg>
<div class="a" style="left:727px;top:330px;width:434px;height:250px;background:transparent;border:5px solid #fcb900;box-shadow:0 1px 3px rgba(0,0,0,.25)"></div>
<svg class="a" style="left:505px;top:435px;" width="235" height="70" viewBox="0 0 235 70">
<defs><filter id="sh" x="-10%" y="-30%" width="120%" height="160%"><feGaussianBlur in="SourceAlpha" stdDeviation="2.2"/><feOffset dx="-0.5" dy="-2"/><feComponentTransfer><feFuncA type="linear" slope="0.75"/></feComponentTransfer><feMerge><feMergeNode/><feMergeNode in="SourceGraphic"/></feMerge></filter></defs>
<path d="M20 29.4H169.4V15L213.9 37.4L169.4 59.6V45H20Z" fill="#fcb900" filter="url(#sh)"/>
</svg>
<div class="a" style="left:33.5px;top:270.5px;width:2.5px;height:2.5px;background:#111;border-radius:50%"></div>
<div class="a" style="left:0.5px;top:293px;width:2.5px;height:2.5px;background:#111;border-radius:50%"></div>
<div class="a" style="left:1178px;top:271px;width:1px;height:721px;background:#dcdcdc;"></div>
<div class="a" style="left:1179px;top:271px;width:1px;height:721px;background:#c4c4c4;"></div>
<div class="a" style="left:1180px;top:271px;width:343px;height:721px;background:#f0f0f0;"></div>
<div class="a" style="left:1194.5px;top:289.5px;font-size:17.5px;line-height:1;color:#242424;white-space:pre;letter-spacing:0.1px;-webkit-text-stroke:0.45px #242424;">QorusDocs</div>
<svg class="a" style="left:1445px;top:292px;" width="21" height="13" viewBox="0 0 21 13"><path d="M1.5 1.5L10.5 10.5L19.5 1.5" fill="none" stroke="#242424" stroke-width="1.3"/></svg>
<svg class="a" style="left:1488px;top:290px;" width="16" height="16" viewBox="0 0 16 16"><path d="M1.5 1.5L14.5 14.5M14.5 1.5L1.5 14.5" fill="none" stroke="#242424" stroke-width="1.3"/></svg>
<div class="a" style="left:1194px;top:323px;width:315px;height:653px;background:#fff;border:1px solid #c9c9c9"></div>
<div class="a" style="left:1195px;top:323px;width:313px;height:55px;background:#152647;"></div>
<svg class="a" style="left:1206px;top:333px;" width="40" height="32" viewBox="0 0 40 32">
<path d="M8 17.5L19.5 8.3L31.7 17.5V29.7H22.2V22H17.2V29.7H8Z" fill="#fff"/>
<rect x="26.2" y="2.7" width="5.5" height="8" fill="#fff"/>
<path d="M3.6 19L19.5 6.3L35.8 19.2" fill="none" stroke="#fff" stroke-width="3.6" stroke-linecap="round"/>
</svg>
<div class="a" style="left:1262px;top:343.4px;font-size:15.2px;line-height:1;color:#fff;white-space:pre;-webkit-text-stroke:0.2px #fff;">Search</div>
<div class="a" style="left:1323.1px;top:348.4px;width:4.8px;height:4.8px;background:#f26b21;border-radius:50%"></div>
<div class="a" style="left:1328.8px;top:348.4px;width:4.8px;height:4.8px;background:#f26b21;border-radius:50%"></div>
<div class="a" style="left:1334.5px;top:348.4px;width:4.8px;height:4.8px;background:#f26b21;border-radius:50%"></div>
<svg class="a" style="left:1417px;top:334px;" width="30" height="30" viewBox="0 0 30 30">
<path d="M15.1 5.6A9.6 9.6 0 1 0 24.7 15.2" fill="none" stroke="#fff" stroke-width="4.8"/>
<path d="M22.3 15H28L27 21.5L28.2 27.2L21 26Z" fill="#fff"/>
<path d="M16.2 3.3L27 13.8H18.8Q16.6 13.8 16.6 11.6Z" fill="#2a8ee0"/>
</svg>
<svg class="a" style="left:1454px;top:336px;" width="28" height="28" viewBox="0 0 28 28">
<circle cx="13.8" cy="14.3" r="10.9" fill="none" stroke="#fff" stroke-width="2.7"/>
<path d="M9.9 10.6C10.2 8.2 11.8 7.2 13.9 7.2C16.2 7.2 17.6 8.6 17.6 10.4C17.6 12.9 14.2 13.2 14.2 16.3" fill="none" stroke="#fff" stroke-width="2.9"/>
<circle cx="14" cy="20.3" r="1.9" fill="#fff"/>
</svg>
<div class="a" style="left:1208px;top:390px;width:168px;height:40px;background:#e6e6e6;border:1px solid #a8a8a8;border-right:none"></div>
<div class="a" style="left:1221.3px;top:403.5px;font-size:16px;line-height:1;color:#6e6e6e;white-space:pre;letter-spacing:-0.1px;">'Sheet1'!A2:A11</div>
<div class="a" style="left:1375px;top:390px;width:83px;height:40px;background:#f47321;"></div>
<div class="a" style="left:1166.5px;width:500px;text-align:center;top:403.1px;font-size:16.5px;line-height:1;color:#fff;white-space:pre;letter-spacing:0.1px;">Answer</div>
<div class="a" style="left:1461px;top:390px;width:33px;height:40px;background:#f47321;"></div>
<svg class="a" style="left:1461px;top:390px;" width="33" height="40" viewBox="0 0 33 40"><path d="M28.55 18.16 L28.55 23.04 L25.04 24.01 L24.95 24.23 L26.75 27.40 L23.30 30.85 L20.13 29.05 L19.91 29.14 L18.94 32.65 L14.06 32.65 L13.09 29.14 L12.87 29.05 L9.70 30.85 L6.25 27.40 L8.05 24.23 L7.96 24.01 L4.45 23.04 L4.45 18.16 L7.96 17.19 L8.05 16.97 L6.25 13.80 L9.70 10.35 L12.87 12.15 L13.09 12.06 L14.06 8.55 L18.94 8.55 L19.91 12.06 L20.13 12.15 L23.30 10.35 L26.75 13.80 L24.95 16.97 L25.04 17.19Z" fill="#fff"/><circle cx="16.5" cy="20.6" r="5.4" fill="#f47321"/></svg>
<div class="a" style="left:1208px;top:430px;width:289px;height:40px;background:#f8f8f8;"></div>
<svg class="a" style="left:1401px;top:439px;" width="24" height="22" viewBox="0 0 24 22">
<path d="M2 10.5L21.5 2.5L15.5 19.5L11 13.5Z" fill="#c9c9c9"/>
<path d="M11 13.5L21.5 2.5L8.5 18.5Z" fill="#b0b0b0"/>
</svg>
<svg class="a" style="left:1432px;top:439px;" width="24" height="22" viewBox="0 0 24 22">
<path d="M17.5 6.5H21.5V16H20V19.5L16.5 16H8.5V13" fill="none" stroke="#3a3a3a" stroke-width="1.8" stroke-linejoin="round"/>
<path d="M1.5 1.5H16.5V12H7L3.5 15V12H1.5Z" fill="#3a3a3a" stroke="#3a3a3a" stroke-width="1.2" stroke-linejoin="round"/>
<path d="M5.5 6.5L7.8 8.8L12 4.5" fill="none" stroke="#fff" stroke-width="1.5"/>
</svg>
<svg class="a" style="left:1463px;top:439px;" width="24" height="22" viewBox="0 0 24 22">
<path d="M3 13L12 3.5L20.5 12L14.5 18.5H8Z" fill="#fff" stroke="#3a3a3a" stroke-width="1.8" stroke-linejoin="round"/>
<path d="M12 3.5L20.5 12L16 16.8L7.5 8.3Z" fill="#3a3a3a"/>
<path d="M8 19H21" stroke="#3a3a3a" stroke-width="1.5"/>
</svg>
<div class="a" style="left:1208px;top:483px;width:289px;height:19px;background:#fdc12f;"></div>
<div class="a" style="left:1208px;top:483px;width:2px;height:19px;background:#17733f;"></div>
<div class="a" style="left:1494px;top:483px;width:3px;height:19px;background:#b8b8b8;"></div>
<div class="a" style="left:1208.5px;top:487.0px;font-size:12.3px;line-height:1;color:#fff;white-space:pre;letter-spacing:-0.2px;">0%100%</div>
<div class="a" style="left:996.5px;width:500px;text-align:right;top:487.0px;font-size:12.3px;line-height:1;color:#fff;white-space:pre;">0%</div>
<div class="a" style="left:1208px;top:503.1px;font-size:12.2px;line-height:1;color:#a6a6a6;white-space:pre;">Complete: 0</div>
<div class="a" style="left:1278px;top:503.1px;font-size:12.2px;line-height:1;color:#1e7fd8;white-space:pre;">Draft: 10</div>
<div class="a" style="left:992.5px;width:500px;text-align:right;top:503.1px;font-size:12.2px;line-height:1;color:#a6a6a6;white-space:pre;">Empty: 0</div>
<div class="a" style="left:1208px;top:525px;width:289px;height:1px;background:#e3e3e3;"></div>
<div class="a" style="left:1196px;top:526px;width:311px;height:411px;overflow:hidden">
<div class="a" style="left:21.5px;top:25.1px;font-size:19px;line-height:1;color:#fbb040;white-space:pre">A2</div>
<div class="a" style="left:56px;top:23.4px;font-size:16.2px;line-height:1;color:#5ab3e4;white-space:pre">What certifications does your</div>
<div class="a" style="left:56px;top:45.1px;font-size:16.2px;line-height:1;color:#5ab3e4;white-space:pre">organization hold related to</div>
<div class="a" style="left:56px;top:66.8px;font-size:16.2px;line-height:1;color:#5ab3e4;white-space:pre">information security?</div>
<div class="a" style="left:56px;top:88.4px;font-size:14.3px;line-height:1;color:#111;white-space:pre">Result 1 of 1</div>
<div class="a" style="left:79px;width:200px;text-align:right;top:88.5px;font-size:14.2px;line-height:1;color:#a8a8a8;white-space:pre">Score 100%</div>
<div class="a" style="left:12px;top:123.5px;width:267px;height:1px;background:#e3e3e3"></div>
<div class="a" style="left:21.5px;top:149.3px;font-size:19px;line-height:1;color:#fbb040;white-space:pre">A3</div>
<div class="a" style="left:56px;top:147.7px;font-size:16.2px;line-height:1;color:#5ab3e4;white-space:pre">How do you evaluate the</div>
<div class="a" style="left:56px;top:169.4px;font-size:16.2px;line-height:1;color:#5ab3e4;white-space:pre">security risks of third-party</div>
<div class="a" style="left:56px;top:191.1px;font-size:16.2px;line-height:1;color:#5ab3e4;white-space:pre">vendors?</div>
<div class="a" style="left:56px;top:212.7px;font-size:14.3px;line-height:1;color:#111;white-space:pre">Result 1 of 3</div>
<div class="a" style="left:79px;width:200px;text-align:right;top:212.8px;font-size:14.2px;line-height:1;color:#a8a8a8;white-space:pre">Score 100%</div>
<div class="a" style="left:12px;top:247.8px;width:267px;height:1px;background:#e3e3e3"></div>
<div class="a" style="left:21.5px;top:273.7px;font-size:19px;line-height:1;color:#fbb040;white-space:pre">A4</div>
<div class="a" style="left:56px;top:272.0px;font-size:16.2px;line-height:1;color:#5ab3e4;white-space:pre">Do you require third-party</div>
<div class="a" style="left:56px;top:293.7px;font-size:16.2px;line-height:1;color:#5ab3e4;white-space:pre">vendors to adhere to your</div>
<div class="a" style="left:56px;top:315.4px;font-size:16.2px;line-height:1;color:#5ab3e4;white-space:pre">security policies?</div>
<div class="a" style="left:56px;top:337.0px;font-size:14.3px;line-height:1;color:#111;white-space:pre">Result 1 of 4</div>
<div class="a" style="left:79px;width:200px;text-align:right;top:337.1px;font-size:14.2px;line-height:1;color:#a8a8a8;white-space:pre">Score 100%</div>
<div class="a" style="left:12px;top:372.1px;width:267px;height:1px;background:#e3e3e3"></div>
<div class="a" style="left:21.5px;top:398.0px;font-size:19px;line-height:1;color:#fbb040;white-space:pre">A5</div>
<div class="a" style="left:56px;top:396.3px;font-size:16.2px;line-height:1;color:#5ab3e4;white-space:pre">How do you handle</div>
<div class="a" style="left:56px;top:418.0px;font-size:16.2px;line-height:1;color:#5ab3e4;white-space:pre">compliance with local and</div>
<div class="a" style="left:56px;top:439.7px;font-size:16.2px;line-height:1;color:#5ab3e4;white-space:pre">international data security</div>
<div class="a" style="left:56px;top:461.3px;font-size:14.3px;line-height:1;color:#111;white-space:pre">Result 1 of 1</div>
<div class="a" style="left:79px;width:200px;text-align:right;top:461.4px;font-size:14.2px;line-height:1;color:#a8a8a8;white-space:pre">Score 100%</div>
<div class="a" style="left:12px;top:496.4px;width:267px;height:1px;background:#e3e3e3"></div>
<div class="a" style="left:282px;top:0;width:19px;height:411px;background:#f7f7f7"></div>
<svg class="a" style="left:284px;top:5px" width="15" height="11" viewBox="0 0 15 11"><path d="M7.5 1.5L13 9.5H2Z" fill="#8a8a8a" stroke="#8a8a8a" stroke-linejoin="round"/></svg>
<div class="a" style="left:286px;top:23px;width:11px;height:120px;background:#8a8a8a;border-radius:6px"></div>
<svg class="a" style="left:284px;top:395px" width="15" height="11" viewBox="0 0 15 11"><path d="M7.5 9.5L13 1.5H2Z" fill="#8a8a8a" stroke="#8a8a8a" stroke-linejoin="round"/></svg>
</div>
<svg class="a" style="left:1199px;top:947px;" width="23" height="19" viewBox="0 0 23 19">
<circle cx="4" cy="4" r="2.8" fill="#1e7fd8"/><circle cx="18" cy="15" r="2.8" fill="#1e7fd8"/>
<path d="M4 4H9.5V15H18" fill="none" stroke="#1e7fd8" stroke-width="2"/>
</svg>
<div class="a" style="left:1232.2px;top:949.1px;font-size:14.1px;line-height:1;color:#111;white-space:pre;letter-spacing:0.05px;">RFP Response (SPO) &gt; Global Medical...</div>
<div class="a" style="left:0px;top:952px;width:1178px;height:39px;background:#e3e3e3;"></div>
<div class="a" style="left:142px;top:951px;width:72px;height:36px;background:#fff;border-radius:0 0 7px 7px"></div>
<div class="a" style="left:130px;top:952px;width:12px;height:12px;background:#fff;"></div>
<div class="a" style="left:130px;top:952px;width:12px;height:12px;background:#e3e3e3;border-top-right-radius:8px"></div>
<div class="a" style="left:214px;top:952px;width:12px;height:12px;background:#fff;"></div>
<div class="a" style="left:214px;top:952px;width:12px;height:12px;background:#e3e3e3;border-top-left-radius:8px"></div>
<svg class="a" style="left:31px;top:962px;" width="12" height="16" viewBox="0 0 12 16"><path d="M9 2L3 8L9 14" fill="none" stroke="#a0a0a0" stroke-width="1.3"/></svg>
<svg class="a" style="left:71px;top:962px;" width="12" height="16" viewBox="0 0 12 16"><path d="M3 2L9 8L3 14" fill="none" stroke="#a0a0a0" stroke-width="1.3"/></svg>
<div class="a" style="left:152.5px;top:960px;font-size:18px;line-height:1;color:#242424;white-space:pre;-webkit-text-stroke:0.55px #242424;transform:scaleX(0.905);transform-origin:0 0;">Sheet1</div>
<div class="a" style="left:152px;top:982px;width:52px;height:2px;background:#137140;"></div>
<div class="a" style="left:219px;top:960px;width:1px;height:24px;background:#c8c8c8;"></div>
<svg class="a" style="left:270px;top:962px;" width="18" height="18" viewBox="0 0 18 18"><path d="M9 1.8V16.2M1.8 9H16.2" stroke="#333" stroke-width="1.7"/></svg>
<div class="a" style="left:710px;top:966px;width:3px;height:3px;background:#242424;border-radius:1px"></div>
<div class="a" style="left:710px;top:971px;width:3px;height:3px;background:#242424;border-radius:1px"></div>
<div class="a" style="left:710px;top:976px;width:3px;height:3px;background:#242424;border-radius:1px"></div>
<div class="a" style="left:732px;top:961px;width:424px;height:21px;background:#f3f3f3;border-radius:11px"></div>
<svg class="a" style="left:736px;top:964px;" width="12" height="14" viewBox="0 0 12 14"><path d="M2.5 7L9.5 2.5V11.5Z" fill="#6e6e6e" stroke="#6e6e6e" stroke-linejoin="round"/></svg>
<div class="a" style="left:753px;top:966px;width:250px;height:11px;background:#707070;border-radius:6px"></div>
<svg class="a" style="left:1139px;top:964px;" width="12" height="14" viewBox="0 0 12 14"><path d="M9.5 7L2.5 2.5V11.5Z" fill="#6e6e6e" stroke="#6e6e6e" stroke-linejoin="round"/></svg>
<div class="a" style="left:0px;top:992px;width:1524px;height:1px;background:#d6d6d6;"></div>
<div class="a" style="left:0px;top:993px;width:1524px;height:26px;background:#f3f3f3;"></div>
<div class="a" style="left:16.5px;top:1000.6px;font-size:12.2px;line-height:1;color:#424242;white-space:pre;">Ready</div>
<svg class="a" style="left:76px;top:997px;" width="21" height="20" viewBox="0 0 21 20">
<circle cx="9.5" cy="3.5" r="2.2" fill="none" stroke="#424242" stroke-width="1.2"/>
<path d="M2 6.5C5 8 14 8 17 6.5M9.5 8V12.5C9.5 14 7 15 6 18M9.5 12.5C11 12.5 12 14 12 15" fill="none" stroke="#424242" stroke-width="1.2"/>
<path d="M12.5 15.5L15 18L20 12" fill="none" stroke="#424242" stroke-width="1.3"/>
</svg>
<div class="a" style="left:99px;top:999.9px;font-size:13.1px;line-height:1;color:#424242;white-space:pre;">Accessibility: Good to go</div>
<div class="a" style="left:919px;top:1000.2px;font-size:12.7px;line-height:1;color:#424242;white-space:pre;">Count: 10</div>
<svg class="a" style="left:997px;top:996px;" width="22" height="20" viewBox="0 0 22 20">
<path d="M7 14H2V2.5H19V8" fill="none" stroke="#424242" stroke-width="1.2"/>
<path d="M18.31 12.42 L18.31 15.18 L16.66 15.53 L16.57 15.67 L17.10 17.27 L14.71 18.65 L13.58 17.40 L13.42 17.40 L12.29 18.65 L9.90 17.27 L10.43 15.67 L10.34 15.53 L8.69 15.18 L8.69 12.42 L10.34 12.07 L10.43 11.93 L9.90 10.33 L12.29 8.95 L13.42 10.20 L13.58 10.20 L14.71 8.95 L17.10 10.33 L16.57 11.93 L16.66 12.07Z" fill="#f3f3f3" stroke="#424242" stroke-width="1.1"/><circle cx="13.5" cy="13.8" r="1.5" fill="none" stroke="#424242" stroke-width="1"/>
</svg>
<div class="a" style="left:1020px;top:1000.1px;font-size:12.8px;line-height:1;color:#424242;white-space:pre;">Display Settings</div>
<div class="a" style="left:1137px;top:992px;width:50px;height:27px;background:#e0e0e0;"></div>
<svg class="a" style="left:1151px;top:996px;" width="20" height="20" viewBox="0 0 20 20"><path d="M2 2.5H18M2 7.5H18M2 12.5H18M2 17.5H18M2.5 2V18M7.5 2V18M12.5 2V18M17.5 2V18" stroke="#424242" stroke-width="1.2"/></svg>
<svg class="a" style="left:1201px;top:996px;" width="20" height="20" viewBox="0 0 20 20"><rect x="2" y="2" width="16" height="16" fill="none" stroke="#424242" stroke-width="1.3"/><rect x="5" y="5" width="10" height="10" fill="none" stroke="#424242" stroke-width="1"/><path d="M7 8H13M7 10.5H13M7 13H13" stroke="#424242" stroke-width="1"/></svg>
<svg class="a" style="left:1251px;top:996px;" width="20" height="20" viewBox="0 0 20 20"><rect x="2" y="2" width="16" height="16" fill="none" stroke="#424242" stroke-width="1.3"/><path d="M2 11H13V2M8 2V11" fill="none" stroke="#424242" stroke-width="1.3"/></svg>
<div class="a" style="left:1293px;top:1005px;width:11px;height:1px;background:#424242;"></div>
<div class="a" style="left:1310px;top:1005px;width:125px;height:1px;background:#8a8a8a;"></div>
<div class="a" style="left:1371px;top:998px;width:4px;height:15px;background:#6a6a6a;border-radius:1px"></div>
<svg class="a" style="left:1439px;top:999px;" width="13" height="13" viewBox="0 0 13 13"><path d="M6.5 1V12M1 6.5H12" stroke="#424242" stroke-width="1.2"/></svg>
<div class="a" style="left:1467.5px;top:1000.8px;font-size:12px;line-height:1;color:#424242;white-space:pre;">100%</div>
<div id="lb" class="a"></div><div id="rb" class="a"></div><div id="bb" class="a"></div>
</body></html>
